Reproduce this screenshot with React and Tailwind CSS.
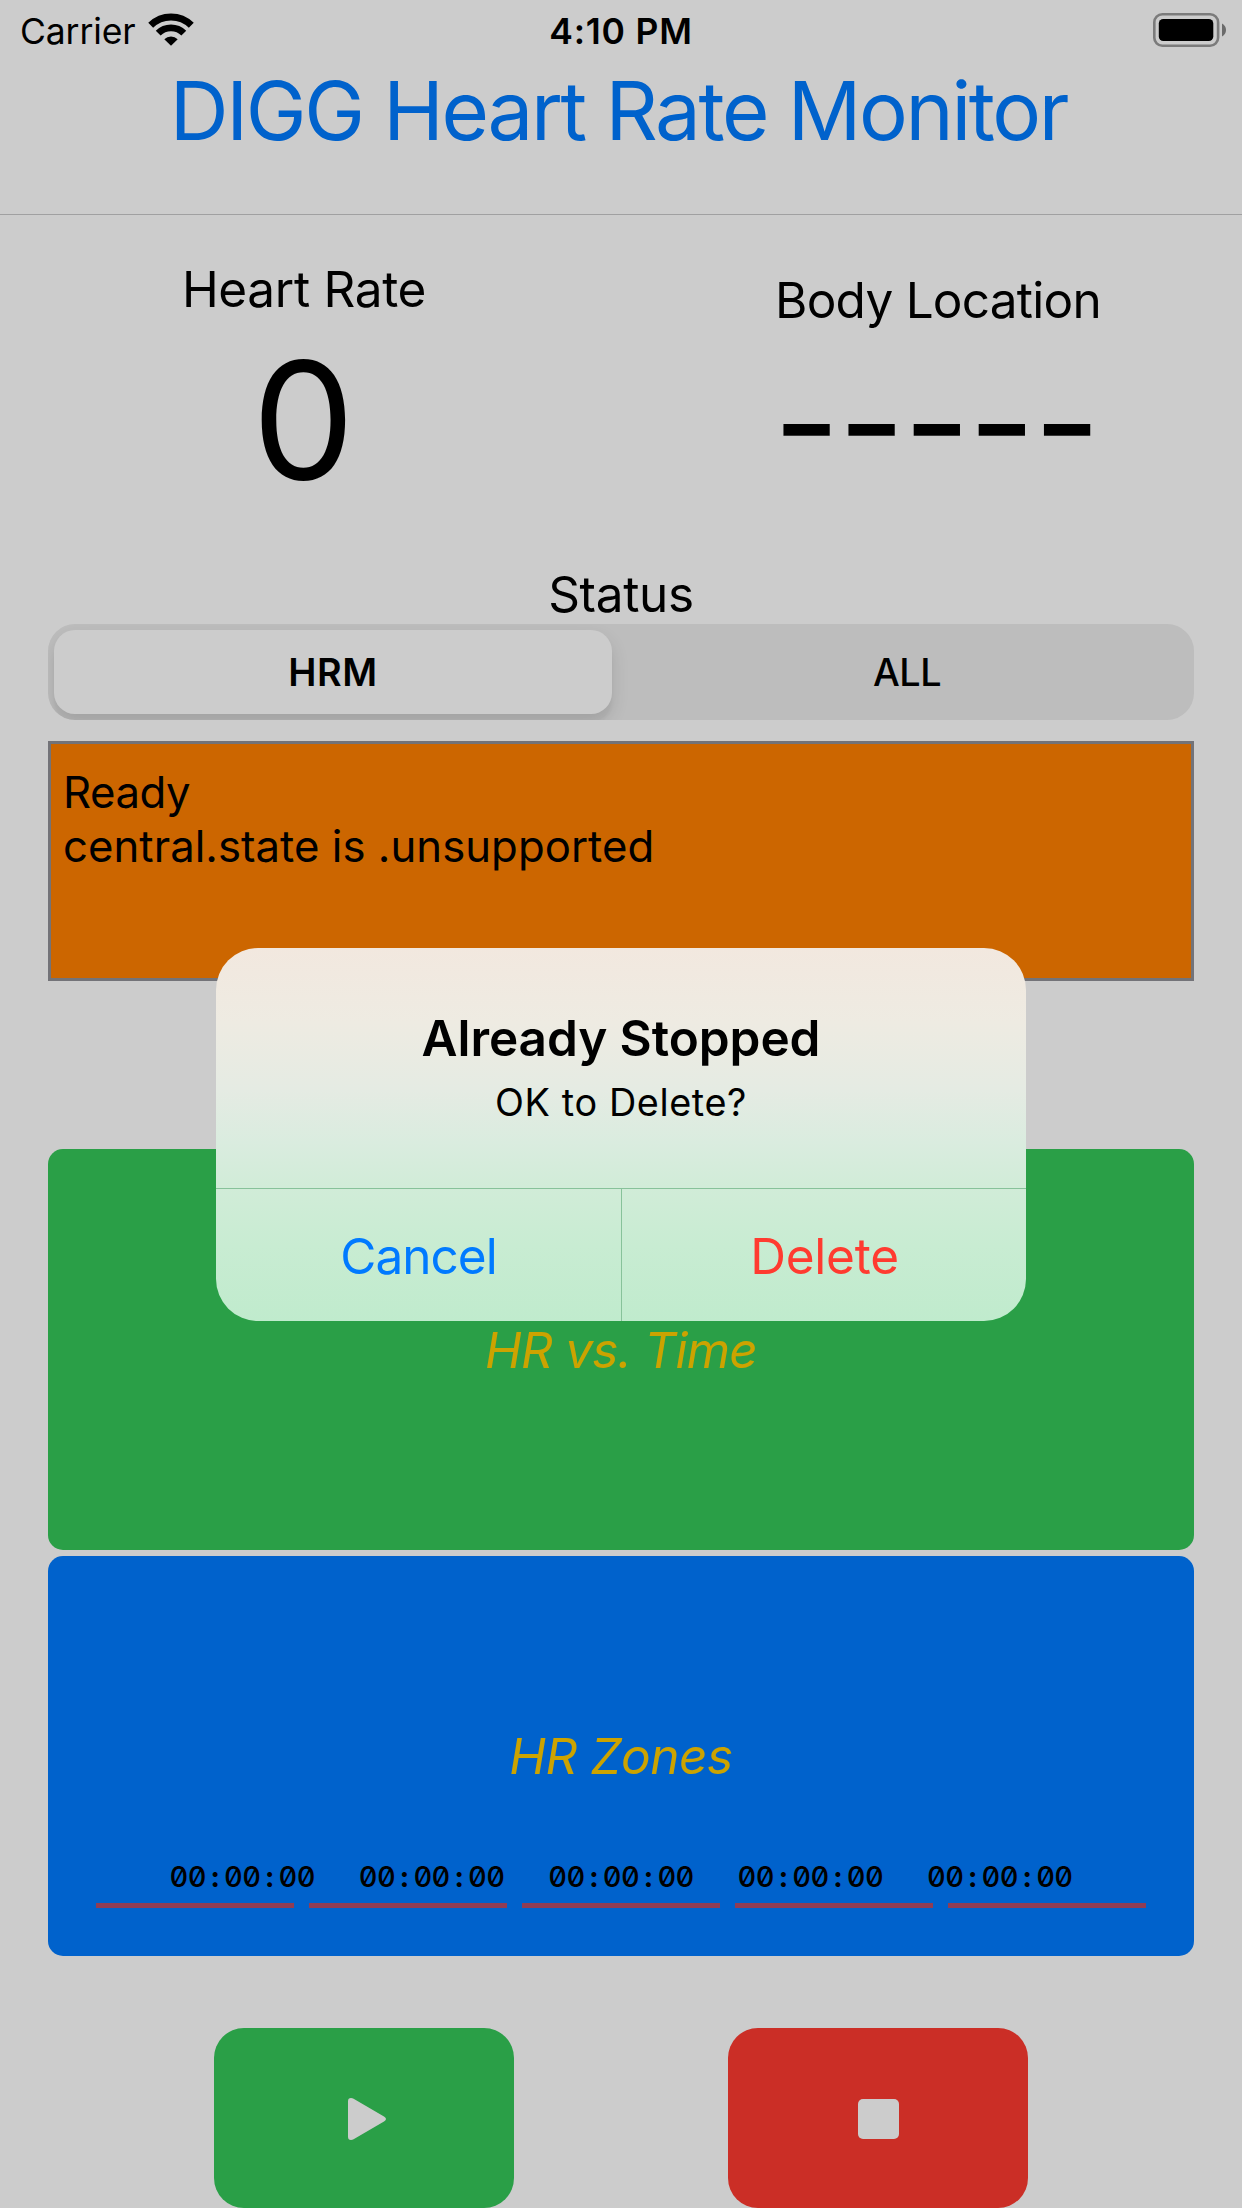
const times = ["00:00:00", "00:00:00", "00:00:00", "00:00:00", "00:00:00"];

function WifiIcon() {
  return (
    <svg className="h-[33px] w-[46px]" viewBox="0 0 46 33" fill="none">
      <path d="M2.7 12.2A29 29 0 0 1 43.3 12.2" stroke="#000" strokeWidth="7" />
      <path d="M10.200 20.2A18 18 0 0 1 35.8 20.2" stroke="#000" strokeWidth="6.8" />
      <path d="M23 32.8L16.3 26.2A9.6 9.6 0 0 1 29.7 26.2Z" fill="#000" />
    </svg>
  );
}

function BatteryIcon() {
  return (
    <svg className="h-[34px] w-[74px]" viewBox="0 0 74 34">
      <rect x="1.3" y="1.3" width="63.8" height="31.4" rx="8" fill="none" stroke="#7b7b7b" strokeWidth="2.6" />
      <rect x="5.8" y="6" width="54.5" height="22" rx="4.5" fill="#000" />
      <path d="M69 10.6C71.6 12 73 14.3 73 17S71.6 22 69 23.4Z" fill="#6a6a6a" />
    </svg>
  );
}

function ZoneTime({ value }) {
  const parts = value.split(":");
  return (
    <div className="w-[189.4px] text-center text-[29px] leading-[39px] font-medium tracking-[-0.6px] [font-feature-settings:'zero','tnum','calt'_0]">
      {parts.map((part, i) => (
        <span key={i}>
          {i > 0 && <span className="mr-[5.6px] ml-[5.4px] font-bold">:</span>}
          {part}
        </span>
      ))}
    </div>
  );
}

function Alert() {
  return (
    <div
      role="alertdialog"
      className="absolute top-[948px] left-[216px] flex h-[373px] w-[810px] flex-col overflow-hidden rounded-[42px] bg-[linear-gradient(180deg,#f2e8df_0%,#eeebe2_20%,#e5ebe3_38%,#daecdf_52%,#d1ecd8_64%,#c8ecd2_80%,#c0ebcd_100%)] text-center"
    >
      <div className="h-[240px] pt-[60px]">
        <h2 className="text-[49.5px] leading-[60px] font-semibold tracking-[-0.07px]">Already Stopped</h2>
        <p className="mt-[9px] text-[37.8px] leading-[50px] tracking-[0.6px]">OK to Delete?</p>
      </div>
      <div className="flex flex-1 border-t border-[#87c29a] text-[49.5px] leading-[60px]">
        <button className="w-[405px] pt-[2px] tracking-[-0.95px] text-[#007aff]">Cancel</button>
        <button className="flex-1 border-l border-[#87c29a] pt-[2px] pl-px tracking-[-0.23px] text-[#ff3b30]">
          Delete
        </button>
      </div>
    </div>
  );
}

export default function App() {
  return (
    <div className="relative h-[2208px] w-[1242px] overflow-hidden bg-[#cccccc] font-[Inter,sans-serif] text-black">
      <header className="h-[215px] border-b border-[#a0a0a1]">
        <div className="grid h-[63px] grid-cols-3 text-[35.5px] leading-[64px]">
          <div className="flex pl-[20px] tracking-[-0.13px]">
            <span>Carrier</span>
            <span className="mt-[13px] ml-[13px]">
              <WifiIcon />
            </span>
          </div>
          <div className="text-center font-semibold tracking-[0.76px]">4:10 PM</div>
          <div className="flex justify-end pt-[13px] pr-[15px]">
            <BatteryIcon />
          </div>
        </div>
        <h1 className="pr-[5px] text-center text-[81.5px] leading-[96px] tracking-[-2.35px] text-[#0062cc]">
          DIGG Heart Rate Monitor
        </h1>
      </header>

      <main className="px-12">
        <section className="flex h-[349px] justify-between text-center text-[49.5px] leading-[60px]">
          <div className="w-[512px] pt-[44px]">
            <div className="tracking-[-0.32px]">Heart Rate</div>
            <div className="pr-px text-[163px] leading-[202px]">0</div>
          </div>
          <div className="w-[512px] pt-[55px]">
            <div className="tracking-[-0.75px]">Body Location</div>
            <div className="pr-[4px] text-[145px] leading-[185px] tracking-[-1.6px]">-----</div>
          </div>
        </section>

        <div className="text-center text-[49.5px] leading-[60px] tracking-[-0.33px]">Status</div>
        <div className="flex h-24 overflow-hidden rounded-[27px] bg-[#bdbdbd] p-[6px] text-[37.8px] leading-[84px]">
          <div className="w-[558px] rounded-[21px] bg-[#cccccc] text-center font-semibold tracking-[0.63px] shadow-[0_8px_18px_rgba(0,0,0,0.12),0_9px_3px_rgba(0,0,0,0.03)]">
            HRM
          </div>
          <div className="flex-1 pl-[14px] text-center font-medium tracking-[-0.48px]">ALL</div>
        </div>

        <div className="mt-[21px] h-60 border-[3px] border-[#737378] bg-[#cc6600] pt-[22px] pl-3 text-[43.7px] leading-[54px]">
          <p className="tracking-[-0.47px]">Ready</p>
          <p className="tracking-[0.03px]">central.state is .unsupported</p>
        </div>

        <div className="mt-[168px] flex h-[401px] items-center justify-center rounded-[15px] bg-[#2a9f47] text-[49.5px] leading-[60px] tracking-[-0.77px] text-[#cca300] italic">
          HR vs. Time
        </div>

        <div className="mt-[6px] h-[400px] rounded-[15px] bg-[#0062cc] px-12 pt-[170px]">
          <div className="text-center text-[49.5px] leading-[60px] tracking-[-0.49px] text-[#cca300] italic">
            HR Zones
          </div>
          <div className="mt-[71px] flex justify-center">
            {times.map((time, i) => (
              <ZoneTime key={i} value={time} />
            ))}
          </div>
          <div className="mt-[7px] flex gap-[15px]">
            {times.map((_, i) => (
              <div key={i} className="h-[5px] flex-1 bg-[#8f3d55]" />
            ))}
          </div>
        </div>

        <div className="mt-[72px] flex justify-center gap-[214px]">
          <button aria-label="Start" className="flex h-[180px] w-[300px] rounded-[30px] bg-[#2a9f47] pt-[70px] pl-[134px]">
            <svg className="h-[42px] w-[38px]" viewBox="0 0 38 42">
              <path d="M0 3.2Q0 0 3 0Q4.3 0 5.6 .8L36 18.4Q38 19.6 38 21T36 23.6L5.6 41.2Q4.3 42 3 42Q0 42 0 38.8Z" fill="#cccccc" />
            </svg>
          </button>
          <button aria-label="Stop" className="flex h-[180px] w-[300px] rounded-[30px] bg-[#cb2e26] pt-[70.5px] pl-[130px]">
            <span className="h-[40.5px] w-[40.5px] rounded-[5px] bg-[#cccccc]" />
          </button>
        </div>
      </main>

      <Alert />
    </div>
  );
}
